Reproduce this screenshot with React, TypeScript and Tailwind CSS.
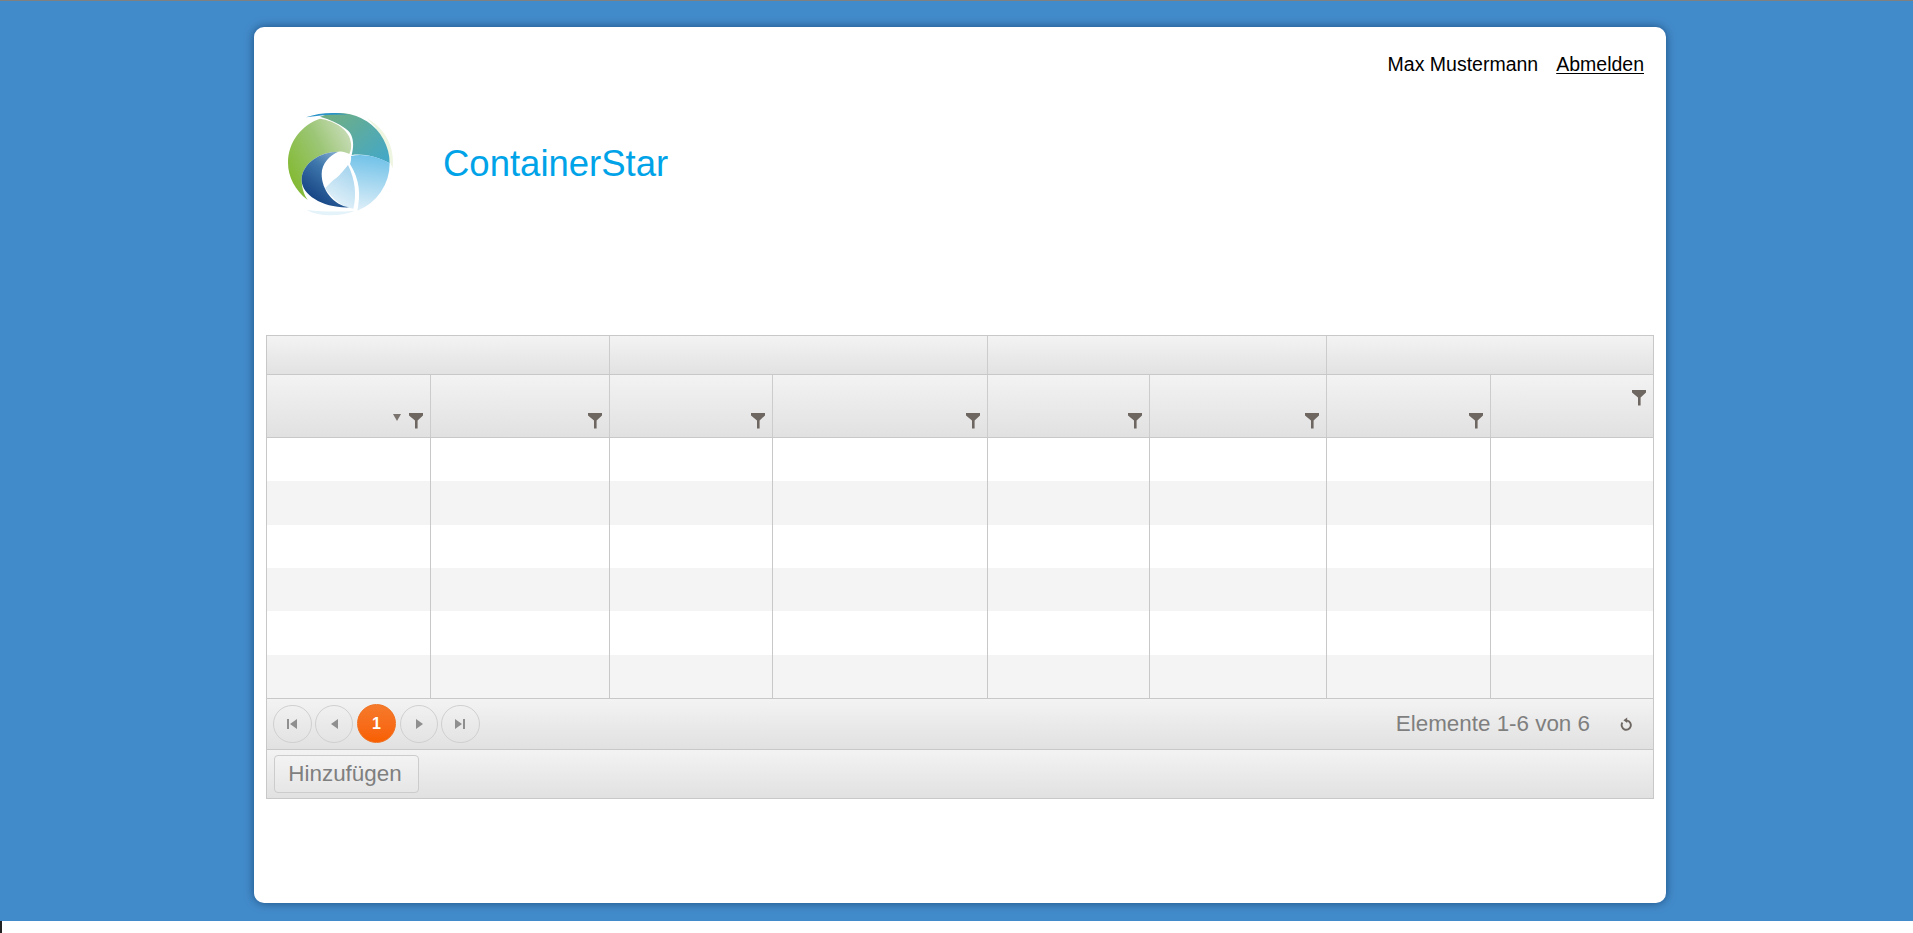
import React from 'react';

const colWidths = [164, 179, 163, 215, 162, 177, 164, 162];
const groupWidths = [343, 378, 339, 326];
const rows = [0, 1, 2, 3, 4, 5];

const FilterIcon = () => (
  <svg width="14" height="16" viewBox="0 0 14 16" className="text-[#6e6660]">
    <path d="M0 0h14v2.4L8.6 7.6V15.5H6V7.6L0 2.4z" fill="currentColor" />
  </svg>
);

const Logo = () => (
  <svg width="130" height="130" viewBox="0 0 390 390">
    <defs>
      <linearGradient id="teal" x1="0.1" y1="0.1" x2="1" y2="0.8">
        <stop offset="0" stopColor="#6fae85" />
        <stop offset="1" stopColor="#45a8c4" />
      </linearGradient>
      <linearGradient id="green" x1="0.1" y1="0.8" x2="1" y2="0.2">
        <stop offset="0" stopColor="#84ba36" />
        <stop offset="0.55" stopColor="#9cc676" />
        <stop offset="1" stopColor="#c8dcb8" />
      </linearGradient>
      <linearGradient id="navy" x1="0.2" y1="0.9" x2="0.8" y2="0">
        <stop offset="0" stopColor="#123f80" />
        <stop offset="0.6" stopColor="#3f78ad" />
        <stop offset="1" stopColor="#8ab0d2" />
      </linearGradient>
      <linearGradient id="sky" x1="0.6" y1="0" x2="0.5" y2="1">
        <stop offset="0" stopColor="#6fc1e8" />
        <stop offset="1" stopColor="#dceef8" />
      </linearGradient>
      <linearGradient id="wedge" x1="0.7" y1="0" x2="0.3" y2="1">
        <stop offset="0" stopColor="#a5d4ee" />
        <stop offset="1" stopColor="#e8f4fa" />
      </linearGradient>
    </defs>
    <path d="M110 330C150 352 210 350 256 332C210 336 160 336 110 330Z" fill="#e4f2f9" />
    <path d="M290 55C345 85 375 140 368 205L355 175C345 125 325 85 290 55Z" fill="#eef5e0" />
    <path d="M150 50A152 152 0 0 1 359 190C320 170 280 160 245 165C254 130 250 100 225 85C205 70 180 58 150 50Z" fill="url(#teal)" />
    <path d="M150 56C195 62 240 90 243 130C245 148 240 158 238 162C225 155 215 153 205 155C150 155 95 190 95 240C95 265 103 285 113 300C75 270 54 230 54 188C54 125 95 75 150 56Z" fill="url(#green)" />
    <path d="M108 52C150 36 200 36 235 44C195 42 150 45 108 52Z" fill="#2a93c8" />
    <path d="M243 168C280 160 325 170 359 190A152 152 0 0 1 262 332C272 285 270 240 240 192C243 184 244 176 243 168Z" fill="url(#sky)" />
    <path d="M234 195C256 240 260 285 250 326C220 325 190 300 165 265L190 240C205 232 222 210 234 195Z" fill="url(#wedge)" />
    <path d="M205 155C150 155 95 190 95 240C95 285 160 325 238 322C190 315 155 270 155 222C155 190 180 165 205 155Z" fill="url(#navy)" />
  </svg>
);

const PagerButton = ({ children, w }: { children: React.ReactNode; w: string }) => (
  <div className={`flex h-[38px] items-center justify-center rounded-full border border-[#d0d0d0] ${w}`}>
    {children}
  </div>
);

export default function App() {
  return (
    <div className="h-[933px] overflow-hidden bg-white font-['Liberation_Sans',Arial,sans-serif]">
      <div className="h-px bg-[#808080]" />
      <div className="h-[920px] bg-[#428bca] pl-[254px] pt-[26px]">
        <div className="h-[876px] w-[1412px] rounded-[10px] bg-white px-3 shadow-[0_0_10px_rgba(0,30,70,0.55)]">
          <div className="flex justify-end gap-[18px] pr-[10px] pt-[25px] text-[19.5px] leading-[24px] text-black">
            <span>Max Mustermann</span>
            <a className="underline underline-offset-2">Abmelden</a>
          </div>
          <div className="flex h-[259px] items-start">
            <div className="ml-[4px] mt-[24px]">
              <Logo />
            </div>
            <h1 className="ml-[43px] mt-[66px] text-[36.5px] leading-[44px] text-[#00a3e8]">ContainerStar</h1>
          </div>

          <div className="w-[1388px] border border-[#c8c8c8]">
            <div className="flex h-[39px] border-b border-[#c8c8c8]">
              {groupWidths.map((w, i) => (
                <div
                  key={i}
                  style={{ width: w }}
                  className="border-r border-[#cccccc] bg-linear-to-b from-[#f3f3f3] to-[#e2e2e2] last:border-r-0"
                />
              ))}
            </div>
            <div className="flex h-[63px] border-b border-[#c8c8c8]">
              {colWidths.map((w, i) => (
                <div
                  key={i}
                  style={{ width: w }}
                  className={`flex justify-end gap-[8px] border-r border-[#cccccc] bg-linear-to-b from-[#f3f3f3] to-[#e1e1e1] pr-[7px] last:border-r-0 ${
                    i === 7 ? 'items-start pt-[15px]' : 'items-end pb-[8px]'
                  }`}
                >
                  {i === 0 && (
                    <span className="mb-[8px] h-0 w-0 border-x-[4.5px] border-t-[7px] border-x-transparent border-t-[#7b736d]" />
                  )}
                  <FilterIcon />
                </div>
              ))}
            </div>
            {rows.map((r) => (
              <div key={r} className={`flex h-[43.33px] ${r % 2 === 1 ? 'bg-[#f4f4f4]' : 'bg-white'}`}>
                {colWidths.map((w, i) => (
                  <div key={i} style={{ width: w }} className="border-r border-[#c8c8c8] last:border-r-0" />
                ))}
              </div>
            ))}
            <div className="flex h-[52px] items-center border-y border-[#c8c8c8] bg-linear-to-b from-[#f3f3f3] to-[#e1e1e1] pl-[6px] pr-[20px]">
              <div className="flex items-center gap-[3px] text-[#8f8f8f]">
                <PagerButton w="w-[39px]">
                  <svg width="11" height="10" viewBox="0 0 11 10"><path d="M0 0h2v10H0zM10 0v10L3 5z" fill="currentColor" /></svg>
                </PagerButton>
                <PagerButton w="w-[38px]">
                  <svg width="7" height="10" viewBox="0 0 7 10"><path d="M7 0v10L0 5z" fill="currentColor" /></svg>
                </PagerButton>
                <div className="mx-[1px] flex h-[39px] w-[39px] items-center justify-center rounded-full border border-[#f0701f] bg-linear-to-b from-[#f57a2a] to-[#f85f00] text-[16px] font-bold text-white">
                  1
                </div>
                <PagerButton w="w-[38px]">
                  <svg width="7" height="10" viewBox="0 0 7 10"><path d="M0 0v10L7 5z" fill="currentColor" /></svg>
                </PagerButton>
                <PagerButton w="w-[39px]">
                  <svg width="11" height="10" viewBox="0 0 11 10"><path d="M0 0v10L7 5zM8 0h2v10H8z" fill="currentColor" /></svg>
                </PagerButton>
              </div>
              <span className="ml-auto text-[22.4px] leading-[26px] text-[#7f7f7f]">Elemente 1-6 von 6</span>
              <svg width="14" height="14" viewBox="0 0 14 14" className="ml-[29px] text-[#6e6660]">
                <path d="M8 3.6A4.6 4.6 0 1 1 3.4 5.6" fill="none" stroke="currentColor" strokeWidth="1.9" />
                <path d="M8.2 0.6V6L4.4 3.3z" fill="currentColor" />
              </svg>
            </div>
            <div className="flex h-[48px] items-center bg-linear-to-b from-[#f3f3f3] to-[#e1e1e1] pl-[7px]">
              <button className="h-[38px] w-[145px] rounded-[4px] border border-[#cccccc] bg-linear-to-b from-[#f3f3f3] to-[#e6e6e6] pr-[3px] text-[22.4px] leading-[26px] text-[#7f7f7f]">
                Hinzufügen
              </button>
            </div>
          </div>
        </div>
      </div>
      <div className="h-[12px] w-[2px] bg-[#222222]" />
    </div>
  );
}
